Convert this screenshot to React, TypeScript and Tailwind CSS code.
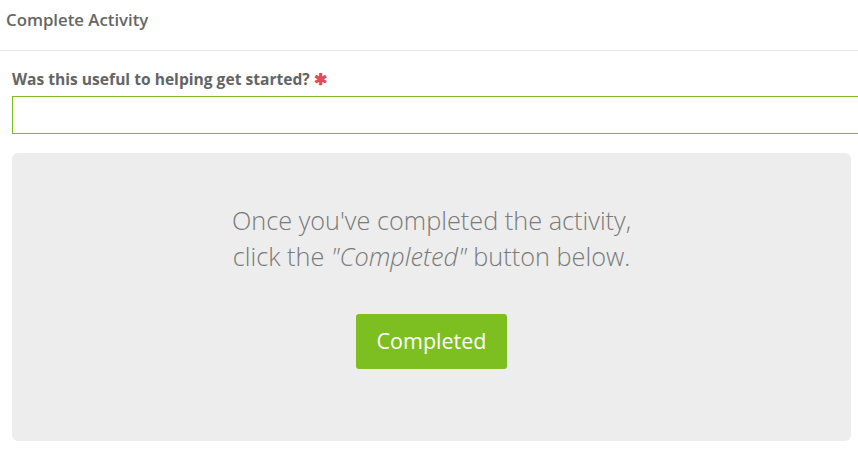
export default function App() {
  return (
    <div className="w-[858px] h-[455px] overflow-hidden bg-white font-['Open_Sans',sans-serif] text-[#666]">
      {/* header */}
      <div className="h-[51px] border-b border-[#e6e6e6] px-[6px] pt-[9px]">
        <h2 className="text-[16.8px] font-semibold leading-[22px] text-[#666]">Complete Activity</h2>
      </div>

      <div className="pl-[12px] pt-[18px]">
        <label className="block text-[15.6px] font-bold leading-[20px] text-[#636466]">
          Was this useful to helping get started?{" "}
          <span className="text-[#e14b5a]">✱</span>
        </label>
        <input
          type="text"
          className="mt-[7px] block h-[38px] w-[860px] border border-[#7dbb20] bg-white px-2 outline-none"
        />

        <div className="mt-[19px] flex h-[288px] w-[839px] flex-col items-center rounded-[6px] bg-[#ededed] pt-[49px]">
          <p className="text-center text-[25.3px] font-light leading-[36px] text-[#7a7a7a]">
            Once you've completed the activity,
            <br />
            click the <em className="italic">"Completed"</em> button below.
          </p>
          <button className="mt-[40px] h-[55px] w-[151px] rounded-[3px] bg-[#7dbe21] text-[21.5px] text-white">
            Completed
          </button>
        </div>
      </div>
    </div>
  );
}
